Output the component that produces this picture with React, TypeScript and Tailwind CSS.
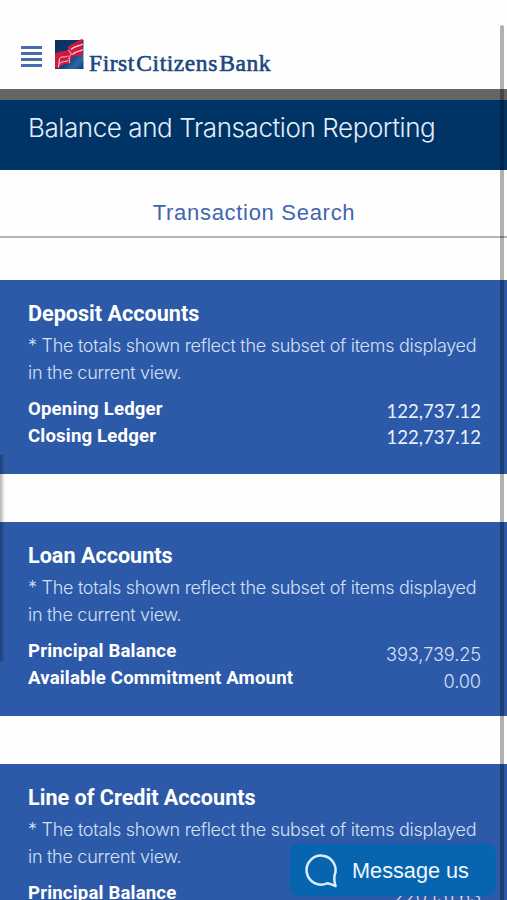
type Row = { label: string; value: string };

const light = "font-['Inter','Liberation_Sans',sans-serif] font-light";

function Logo() {
  return (
    <svg width="31" height="33" viewBox="0 0 31 33" className="shrink-0">
      <defs>
        <linearGradient id="navy" x1="0" y1="0" x2="1" y2="1">
          <stop offset="0" stopColor="#06305f" />
          <stop offset="0.55" stopColor="#0c3a70" />
          <stop offset="0.8" stopColor="#2b6aa8" />
          <stop offset="1" stopColor="#0c3a70" />
        </linearGradient>
      </defs>
      <rect x="1" y="2" width="28.500" height="29" fill="url(#navy)" />
      <path d="M1 16 C5 12.500 9 14 14 12 V8.500 C19 5 23 4 28.500 0.500 V18 C25 18.500 21 17 17.500 20 L15.500 26 C12 25 8 27 4.500 30 H1 Z" fill="#cf1a40" />
      <path d="M14.500 12 L17.500 16 L15 18.500 L15.500 25" fill="none" stroke="#f3dbe4" strokeWidth="0.900" />
      <path d="M17 11.500 C21 7.500 25 8.500 29 6 M18.500 16.500 C22 12.500 25.500 14 29 11.500" fill="none" stroke="#f7dfe7" strokeWidth="1.200" />
      <path d="M4.500 29.500 L5.500 20.500 C8 17.500 11 20 13.500 18 M5.500 26 C8.500 22.500 11 24.500 14 22.500" fill="none" stroke="#f7dfe7" strokeWidth="1" />
    </svg>
  );
}

function Header() {
  return (
    <header className="flex h-[89px] shrink-0 items-start bg-[#fefefe] pt-[38px] pl-[21px]">
      <div className="mt-2 flex w-[21px] flex-col gap-[3.500px]">
        <div className="h-[2.500px] bg-[#4a6bb2]" />
        <div className="h-[2.500px] bg-[#4a6bb2]" />
        <div className="h-[2.500px] bg-[#4a6bb2]" />
        <div className="h-[2.500px] bg-[#4a6bb2]" />
      </div>
      <div className="ml-3 flex items-start">
        <Logo />
        <span className="mt-[13px] ml-1 font-['Liberation_Serif',serif] text-[23.500px] leading-6 tracking-[0.56px] whitespace-nowrap text-[#1c477f] [-webkit-text-stroke:0.6px_#1c477f] [word-spacing:-5px]">
          First Citizens Bank
        </span>
      </div>
    </header>
  );
}

function AccountCard({ title, rows, valueClass }: { title: string; rows: Row[]; valueClass: string }) {
  return (
    <section className="h-[194px] shrink-0 bg-[#2d5aa8] pt-5 pr-[26px] pl-7">
      <h2 className="font-['Roboto',sans-serif] text-[21.600px] leading-[27px] font-bold whitespace-nowrap text-white">{title}</h2>
      <p className={`mt-[5px] text-[18px] leading-[27px] tracking-[-0.28px] whitespace-nowrap text-[#d5e0f5] ${light}`}>
        * The totals shown reflect the subset of items displayed
        <br />
        in the current view.
      </p>
      <div className="mt-2.5 flex justify-between">
        <div className="font-['Roboto',sans-serif] text-[18.600px] leading-[27px] font-bold tracking-[0.17px] whitespace-nowrap text-white">
          {rows.map((r) => (
            <div key={r.label}>{r.label}</div>
          ))}
        </div>
        <div className={`text-right ${valueClass}`}>
          {rows.map((r) => (
            <div key={r.label}>{r.value}</div>
          ))}
        </div>
      </div>
    </section>
  );
}

const loanValue = "pt-[3px] font-['Inter','Liberation_Sans',sans-serif] font-light text-[18.200px] leading-[27px] tracking-[-0.1px] text-[#d5e0f5]";

export default function App() {
  return (
    <div className="relative flex h-[900px] w-[507px] flex-col overflow-hidden bg-[#fefefe]">
      <Header />
      <div className="h-[11px] shrink-0 bg-[#666666]" />
      <div className="h-[70px] shrink-0 bg-[#003366] pt-3 pl-7">
        <h1 className={`text-[26px] leading-[32px] tracking-[-0.42px] whitespace-nowrap text-[#e3eefb] ${light}`}>
          Balance and Transaction Reporting
        </h1>
      </div>
      <div className="flex h-[68px] shrink-0 items-end justify-center border-b-2 border-[#b4b4b4] pb-[7px] pl-px">
        <a className="font-['Liberation_Sans',sans-serif] text-[22px] leading-8 tracking-[0.7px] text-[#3f66b0]">Transaction Search</a>
      </div>
      <main className="flex flex-col gap-12 pt-[42px]">
        <AccountCard
          title="Deposit Accounts"
          rows={[
            { label: "Opening Ledger", value: "122,737.12" },
            { label: "Closing Ledger", value: "122,737.12" },
          ]}
          valueClass="pt-[2px] font-['Lato',sans-serif] text-[18.500px] leading-[26px] text-[#eaf1fc]"
        />
        <AccountCard
          title="Loan Accounts"
          rows={[
            { label: "Principal Balance", value: "393,739.25" },
            { label: "Available Commitment Amount", value: "0.00" },
          ]}
          valueClass={loanValue}
        />
        <AccountCard
          title="Line of Credit Accounts"
          rows={[{ label: "Principal Balance", value: "220,151.63" }]}
          valueClass={loanValue}
        />
      </main>

      <button className="absolute top-[844px] left-[290px] flex h-[52px] w-[206px] items-center rounded-lg bg-[#0765b0] pt-0.5 pl-[14px]">
        <svg width="34" height="34" viewBox="0 0 34 34" fill="none" stroke="#dcecfb" strokeWidth="2.500" strokeLinejoin="round">
          <path d="M30.500 21.500 A14.500 14.500 0 1 0 23 29.300 C26 29.500 28.500 31 31.500 32 C30.500 29 30 25.500 30.500 21.500 Z" />
        </svg>
        <span className="ml-[14px] font-['Liberation_Sans',sans-serif] text-[21.700px] whitespace-nowrap text-[#f0f7ff]">Message us</span>
      </button>
      <div className="absolute top-[25px] left-[500px] h-[875px] w-1 rounded-t-full bg-black/30" />
      <div className="absolute top-[455px] left-0 h-[207px] w-[5px] bg-linear-to-r from-black/30 to-transparent" />
    </div>
  );
}
